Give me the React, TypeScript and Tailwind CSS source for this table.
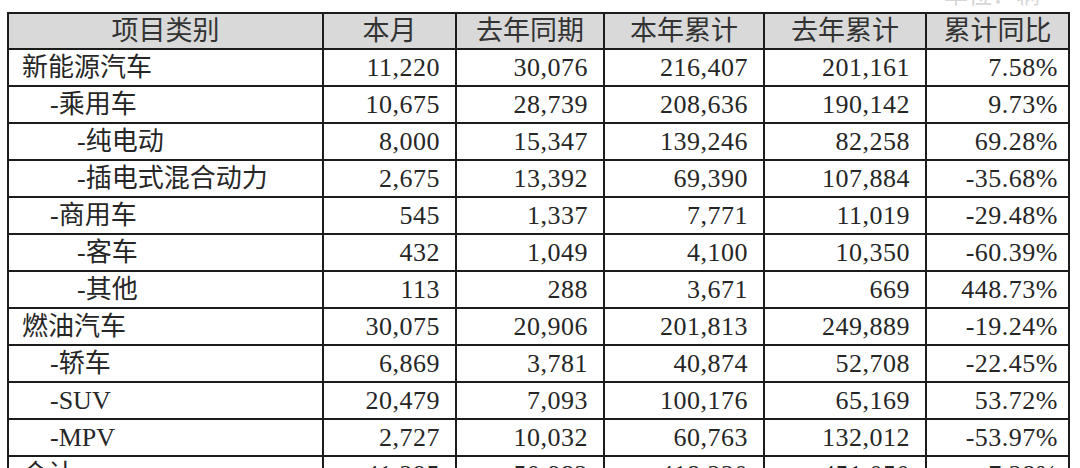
const rows: { label: string; level: number; values: string[] }[] = [
  { label: "新能源汽车", level: 0, values: ["11,220", "30,076", "216,407", "201,161", "7.58%"] },
  { label: "-乘用车", level: 1, values: ["10,675", "28,739", "208,636", "190,142", "9.73%"] },
  { label: "-纯电动", level: 2, values: ["8,000", "15,347", "139,246", "82,258", "69.28%"] },
  { label: "-插电式混合动力", level: 2, values: ["2,675", "13,392", "69,390", "107,884", "-35.68%"] },
  { label: "-商用车", level: 1, values: ["545", "1,337", "7,771", "11,019", "-29.48%"] },
  { label: "-客车", level: 2, values: ["432", "1,049", "4,100", "10,350", "-60.39%"] },
  { label: "-其他", level: 2, values: ["113", "288", "3,671", "669", "448.73%"] },
  { label: "燃油汽车", level: 0, values: ["30,075", "20,906", "201,813", "249,889", "-19.24%"] },
  { label: "-轿车", level: 1, values: ["6,869", "3,781", "40,874", "52,708", "-22.45%"] },
  { label: "-SUV", level: 1, values: ["20,479", "7,093", "100,176", "65,169", "53.72%"] },
  { label: "-MPV", level: 1, values: ["2,727", "10,032", "60,763", "132,012", "-53.97%"] },
  { label: "合计", level: 0, values: ["41,295", "50,982", "418,220", "451,050", "-7.28%"] },
];

const headers = ["项目类别", "本月", "去年同期", "本年累计", "去年累计", "累计同比"];

const indent = ["pl-[13px]", "pl-[41px]", "pl-[68px]"];

export default function App() {
  return (
    <div
      className="h-[468px] w-[1080px] overflow-hidden bg-white text-[#262626]"
      style={{ fontFamily: '"Liberation Serif", "Noto Sans CJK SC", serif' }}
    >
      <div className="flex h-[12px] justify-end overflow-hidden pr-[40px]">
        <span className="-mt-[20px] text-[24px] leading-[30px] text-[#d6d6d6]">单位：辆</span>
      </div>
      <table className="ml-[7px] table-fixed border-collapse border-2 border-[#1c1c1c] text-[26px]">
        <colgroup>
          <col className="w-[315px]" />
          <col className="w-[133px]" />
          <col className="w-[148px]" />
          <col className="w-[160px]" />
          <col className="w-[162px]" />
          <col className="w-[143px]" />
        </colgroup>
        <thead>
          <tr className="bg-[#d9d9d9]">
            {headers.map((h) => (
              <th
                key={h}
                className="h-[36px] border-2 border-[#1c1c1c] p-0 text-center text-[27px] font-normal leading-none text-[#333]"
              >
                {h}
              </th>
            ))}
          </tr>
        </thead>
        <tbody>
          {rows.map((r) => (
            <tr key={r.label}>
              <td className={`h-[37px] border-2 border-[#1c1c1c] p-0 leading-none ${indent[r.level]}`}>
                {r.label}
              </td>
              {r.values.map((v, i) => (
                <td
                  key={i}
                  className={`h-[37px] border-2 border-[#1c1c1c] p-0 text-right leading-none tracking-[0.5px] ${
                    i === 4 ? "pr-[10px]" : "pr-[15px]"
                  }`}
                >
                  {v}
                </td>
              ))}
            </tr>
          ))}
        </tbody>
      </table>
    </div>
  );
}
